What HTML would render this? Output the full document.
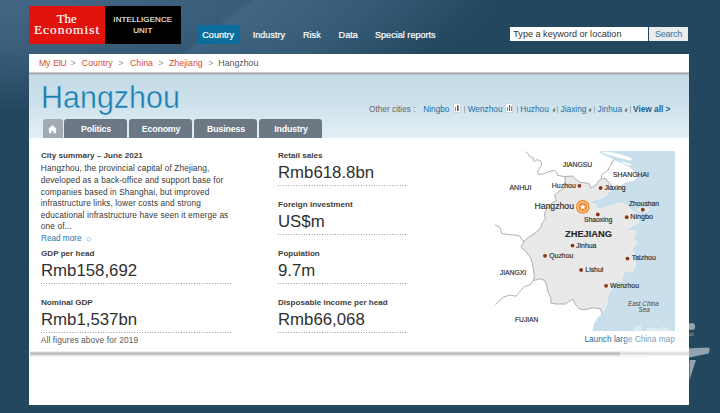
<!DOCTYPE html>
<html><head><meta charset="utf-8"><style>
*{margin:0;padding:0;box-sizing:border-box}
html,body{width:720px;height:413px;overflow:hidden}
body{position:relative;font-family:"Liberation Sans",sans-serif;background:#23475f}
.t{position:absolute;white-space:nowrap;line-height:0}
.b{position:absolute}
.tab{position:absolute;top:119px;height:19px;width:63px;background:#6c7884;border-radius:3px 3px 0 0}
.dot{position:absolute;height:1px;background-image:linear-gradient(90deg,#8393a0 1.1px,transparent 1.1px);background-size:2.6px 1px}
</style></head><body>
<div class="b" style="left:0;top:0;width:720px;height:413px;background:radial-gradient(ellipse 500px 110px at 0px 0px, rgba(68,104,134,0.95) 0%, rgba(68,104,134,0.7) 45%, rgba(68,104,134,0) 100%),#23475f"></div>
<div class="b" style="left:0;top:0;width:720px;height:60px;background:linear-gradient(142deg, rgba(110,155,185,0) 0px, rgba(110,155,185,0) 152px, rgba(110,155,185,0.16) 158px, rgba(110,155,185,0.12) 230px, rgba(110,155,185,0) 300px)"></div>
<div class="b" style="left:29px;top:6px;width:76px;height:38px;background:#e2120c"></div>
<div class="b" style="left:105px;top:6px;width:76px;height:38px;background:#000"></div>
<div class="t" style="left:56.80px;top:19.28px;font-size:12.8px;color:#fff;font-family:'Liberation Serif',serif;-webkit-text-stroke:0.18px #fff">The</div>
<div class="t" style="left:33.90px;top:29.88px;font-size:13.4px;color:#fff;font-family:'Liberation Serif',serif;letter-spacing:1.0px;-webkit-text-stroke:0.18px #fff">Economist</div>
<div class="t" style="left:113.30px;top:20.26px;font-size:7.9px;color:#eee;letter-spacing:0.16px;-webkit-text-stroke:0.15px #eee">INTELLIGENCE</div>
<div class="t" style="left:133.20px;top:31.46px;font-size:7.9px;color:#eee;letter-spacing:0.2px;-webkit-text-stroke:0.15px #eee">UNIT</div>
<div class="b" style="left:197px;top:25px;width:43px;height:19px;background:#0b6d9c"></div>
<div class="t" style="left:202.30px;top:34.85px;font-size:9.1px;color:#fff;-webkit-text-stroke:0.2px #fff">Country</div>
<div class="t" style="left:252.70px;top:34.85px;font-size:9.1px;color:#fff;-webkit-text-stroke:0.2px #fff">Industry</div>
<div class="t" style="left:303.00px;top:34.85px;font-size:9.1px;color:#fff;-webkit-text-stroke:0.2px #fff">Risk</div>
<div class="t" style="left:338.60px;top:34.85px;font-size:9.1px;color:#fff;-webkit-text-stroke:0.2px #fff">Data</div>
<div class="t" style="left:375.00px;top:34.85px;font-size:9.1px;color:#fff;-webkit-text-stroke:0.2px #fff">Special reports</div>
<div class="b" style="left:510px;top:27px;width:138px;height:14px;background:#fff"></div>
<div class="b" style="left:649px;top:27px;width:39px;height:14px;background:#ececec"></div>
<div class="t" style="left:513.30px;top:34.15px;font-size:9.1px;color:#333;">Type a keyword or location</div>
<div class="t" style="left:655.00px;top:34.15px;font-size:9.1px;color:#3474a3;letter-spacing:-0.3px">Search</div>
<div class="b" style="left:29px;top:54px;width:660px;height:351px;background:#fff"></div>
<div class="b" style="left:29px;top:74px;width:660px;height:64px;background:linear-gradient(#c3dbe7 0%,#cbe0ea 40%,#e4eff5 100%)"></div>
<div class="b" style="left:29px;top:72px;width:660px;height:3px;background:linear-gradient(#e0e0e0 0%,#a2a6a8 45%,#a9b3b8 65%,#bfd5e0 100%)"></div>
<div class="t" style="left:39.00px;top:62.65px;font-size:8.8px;color:#d64d38;"><span style="letter-spacing:-0.3px">My</span></div>
<div class="t" style="left:53.30px;top:62.65px;font-size:8.8px;color:#d64d38;"><span style="letter-spacing:-0.7px">EIU</span></div>
<div class="t" style="left:70.60px;top:62.65px;font-size:8.8px;color:#999;">&gt;</div>
<div class="t" style="left:81.80px;top:62.65px;font-size:8.8px;color:#d64d38;">Country</div>
<div class="t" style="left:118.30px;top:62.65px;font-size:8.8px;color:#999;">&gt;</div>
<div class="t" style="left:130.00px;top:62.65px;font-size:8.8px;color:#d64d38;">China</div>
<div class="t" style="left:158.30px;top:62.65px;font-size:8.8px;color:#999;">&gt;</div>
<div class="t" style="left:169.00px;top:62.65px;font-size:8.8px;color:#d64d38;">Zhejiang</div>
<div class="t" style="left:208.30px;top:62.65px;font-size:8.8px;color:#999;">&gt;</div>
<div class="t" style="left:218.30px;top:62.65px;font-size:8.8px;color:#555;">Hangzhou</div>
<div class="t" style="left:40.60px;top:97.21px;font-size:32px;color:#1a7fb0;transform:scaleX(0.952);transform-origin:0 0;-webkit-text-stroke:0.45px #c8deea">Hangzhou</div>
<div class="t" style="left:369.00px;top:108.92px;font-size:8.3px;color:#666;">Other cities :</div>
<div class="t" style="left:423.20px;top:108.92px;font-size:8.3px;color:#1d6ea5;">Ningbo</div>
<div class="t" style="left:467.70px;top:108.92px;font-size:8.3px;color:#1d6ea5;">Wenzhou</div>
<div class="t" style="left:520.20px;top:108.92px;font-size:8.3px;color:#1d6ea5;">Huzhou</div>
<div class="t" style="left:560.60px;top:108.92px;font-size:8.3px;color:#1d6ea5;">Jiaxing</div>
<div class="t" style="left:597.60px;top:108.92px;font-size:8.3px;color:#1d6ea5;">Jinhua</div>
<div class="t" style="left:633.00px;top:108.92px;font-size:8.3px;color:#1a5f90;font-weight:bold;">View all &gt;</div>
<div class="b" style="left:463.9px;top:106px;width:0.8px;height:7px;background:#a3b0b9"></div>
<div class="b" style="left:516.8px;top:106px;width:0.8px;height:7px;background:#a3b0b9"></div>
<div class="b" style="left:557.3px;top:106px;width:0.8px;height:7px;background:#a3b0b9"></div>
<div class="b" style="left:594px;top:106px;width:0.8px;height:7px;background:#a3b0b9"></div>
<div class="b" style="left:630px;top:106px;width:0.8px;height:7px;background:#a3b0b9"></div>
<div class="b" style="left:452.9px;top:103px;width:8px;height:9.5px;background:#fff;border:1px solid #d4d4d4"></div><div class="b" style="left:454.7px;top:107px;width:1px;height:3.5px;background:#888"></div><div class="b" style="left:456.5px;top:105px;width:1.2px;height:5.5px;background:#1d6ea5"></div><div class="b" style="left:458.29999999999995px;top:106px;width:1px;height:4.5px;background:#888"></div>
<div class="b" style="left:505.4px;top:103px;width:8px;height:9.5px;background:#fff;border:1px solid #d4d4d4"></div><div class="b" style="left:507.2px;top:107px;width:1px;height:3.5px;background:#888"></div><div class="b" style="left:509.0px;top:105px;width:1.2px;height:5.5px;background:#1d6ea5"></div><div class="b" style="left:510.79999999999995px;top:106px;width:1px;height:4.5px;background:#888"></div>
<svg class="b" style="left:551.9px;top:107px" width="4" height="5" viewBox="0 0 4 5"><path d="M3.2,0.8 L3.2,4.6 L0.6,4.6 L1,2.6 Z" fill="#7a7a7a"/></svg>
<svg class="b" style="left:588.2px;top:107px" width="4" height="5" viewBox="0 0 4 5"><path d="M3.2,0.8 L3.2,4.6 L0.6,4.6 L1,2.6 Z" fill="#7a7a7a"/></svg>
<svg class="b" style="left:623.6px;top:107px" width="4" height="5" viewBox="0 0 4 5"><path d="M3.2,0.8 L3.2,4.6 L0.6,4.6 L1,2.6 Z" fill="#7a7a7a"/></svg>
<div class="tab" style="left:43px;width:20px;background:#a0aab3"></div>
<svg class="b" style="left:47px;top:124px" width="11" height="10" viewBox="0 0 11 10"><path d="M5.5,1 L10,5.6 L9,5.6 L9,9.2 L6.6,9.2 L6.6,7 L4.4,7 L4.4,9.2 L2,9.2 L2,5.6 L1,5.6 Z" fill="#fff"/></svg>
<div class="tab" style="left:64px"></div>
<div class="t" style="left:64.5px;width:63px;text-align:center;top:128.6px;font-size:8.8px;letter-spacing:-0.15px;color:#fff;font-weight:bold">Politics</div>
<div class="tab" style="left:129px"></div>
<div class="t" style="left:129.5px;width:63px;text-align:center;top:128.6px;font-size:8.8px;letter-spacing:-0.15px;color:#fff;font-weight:bold">Economy</div>
<div class="tab" style="left:194px"></div>
<div class="t" style="left:194.5px;width:63px;text-align:center;top:128.6px;font-size:8.8px;letter-spacing:-0.15px;color:#fff;font-weight:bold">Business</div>
<div class="tab" style="left:259px"></div>
<div class="t" style="left:259.5px;width:63px;text-align:center;top:128.6px;font-size:8.8px;letter-spacing:-0.15px;color:#fff;font-weight:bold">Industry</div>
<div class="t" style="left:41.00px;top:156.09px;font-size:8.1px;color:#3d3d3d;font-weight:bold;">City summary – June 2021</div>
<div class="t" style="left:40.80px;top:168.42px;font-size:8.3px;color:#383838;letter-spacing:0.12px">Hangzhou, the provincial capital of Zhejiang,</div>
<div class="t" style="left:40.80px;top:180.02px;font-size:8.3px;color:#383838;letter-spacing:0.12px">developed as a back-office and support base for</div>
<div class="t" style="left:40.80px;top:191.62px;font-size:8.3px;color:#383838;letter-spacing:0.12px">companies based in Shanghai, but improved</div>
<div class="t" style="left:40.80px;top:203.22px;font-size:8.3px;color:#383838;letter-spacing:0.12px">infrastructure links, lower costs and strong</div>
<div class="t" style="left:40.80px;top:214.82px;font-size:8.3px;color:#383838;letter-spacing:0.12px">educational infrastructure have seen it emerge as</div>
<div class="t" style="left:40.80px;top:226.42px;font-size:8.3px;color:#383838;letter-spacing:0.12px">one of...</div>
<div class="t" style="left:41.00px;top:238.56px;font-size:8.2px;color:#2474ab;">Read more &nbsp;<span style="font-size:7px;color:#5b9bc6">&#9671;</span></div>
<div class="t" style="left:41.00px;top:253.99px;font-size:8.1px;color:#3d3d3d;font-weight:bold;">GDP per head</div>
<div class="t" style="left:41.00px;top:271.18px;font-size:16.8px;color:#303030;">Rmb158,692</div>
<div class="dot" style="left:41px;top:283px;width:192px"></div>
<div class="t" style="left:41.00px;top:302.99px;font-size:8.1px;color:#3d3d3d;font-weight:bold;">Nominal GDP</div>
<div class="t" style="left:41.00px;top:320.18px;font-size:16.8px;color:#303030;">Rmb1,537bn</div>
<div class="dot" style="left:41px;top:332px;width:192px"></div>
<div class="t" style="left:40.80px;top:340.42px;font-size:8.3px;color:#555;letter-spacing:0.13px">All figures above for 2019</div>
<div class="t" style="left:278.00px;top:156.29px;font-size:8.1px;color:#3d3d3d;font-weight:bold;">Retail sales</div>
<div class="t" style="left:278.00px;top:173.48px;font-size:16.8px;color:#303030;">Rmb618.8bn</div>
<div class="dot" style="left:278px;top:185.3px;width:130px"></div>
<div class="t" style="left:278.00px;top:204.69px;font-size:8.1px;color:#3d3d3d;font-weight:bold;">Foreign investment</div>
<div class="t" style="left:278.00px;top:221.88px;font-size:16.8px;color:#303030;">US$m</div>
<div class="dot" style="left:278px;top:233.7px;width:130px"></div>
<div class="t" style="left:278.00px;top:253.99px;font-size:8.1px;color:#3d3d3d;font-weight:bold;">Population</div>
<div class="t" style="left:278.00px;top:271.18px;font-size:16.8px;color:#303030;">9.7m</div>
<div class="dot" style="left:278px;top:283px;width:130px"></div>
<div class="t" style="left:278.00px;top:302.99px;font-size:8.1px;color:#3d3d3d;font-weight:bold;">Disposable income per head</div>
<div class="t" style="left:278.00px;top:320.18px;font-size:16.8px;color:#303030;">Rmb66,068</div>
<div class="dot" style="left:278px;top:332px;width:130px"></div>
<div class="b" style="left:30px;top:351px;width:659px;height:6px;background:linear-gradient(#fff 0%,#b2b2b2 38%,#c8c8c8 55%,#fff 100%)"></div>
<svg class="b" style="left:0;top:0" width="720" height="413" viewBox="0 0 720 413"><rect x="585" y="151" width="90" height="180" fill="#c9e0ec"/><path d="M480,140 L600,140 L600,151 L600,153 L614.4,160.1 L622.8,163.7 L630.1,167.4 L635,172.2 L637.4,177 L633.7,180.7 L625.5,182.4 L620.7,185.3 L612.9,189.6 L608.1,192.5 L606.1,195.9 L599.4,199.3 L592.6,200.7 L589.7,203 L595.5,203.7 L596.5,207 L599.4,209 L607.1,207 L613.9,204.1 L620.7,202.7 L622.3,202.4 L627.1,206 L632,209.7 L636.8,213.3 L639.2,218.2 L638.6,222.4 L634.4,225.4 L629.5,227.8 L626.5,230.9 L627.7,231.4 L631.9,229.7 L637,231.4 L633.6,238.2 L637,242.4 L634.4,245.8 L631.9,250 L634.4,253.4 L636.1,260.2 L635.3,267 L632.7,272.1 L625.1,272.1 L621.7,277.2 L623.4,280.5 L620,282.2 L616.6,280.5 L615,285.6 L610.7,290.7 L607,297 L607.8,303 L603.6,311.4 L602.2,313.6 L598,317 L593.9,323.9 L592.5,331 L592.5,331.5 L480,331.5 Z" fill="#fff"/><path d="M602.2,313.6 L600.3,308.8 L592.5,307.8 L584.8,309.8 L579,308.8 L575.1,304 L573.1,299.1 L571.2,300.1 L565.4,304 L555.7,304 L550.9,303 L550.9,298.1 L548,292.3 L547,286.5 L545,280.7 L540.2,278.8 L533.4,280.7 L534.4,276.8 L533.4,269 L532.4,263.3 L530.5,257.4 L525.7,251.6 L520.8,247 L522,245 L524.3,241 L527.7,237.7 L532.3,235 L537.7,231 L541,227 L542.3,223 L545.5,219 L544.5,215 L545.5,211 L547.5,207 L552,203 L556.5,200.5 L555.5,198.3 L554.5,195 L558,192 L561.7,189.6 L564.7,187 L565.1,182 L565.1,176.5 L572.7,176 L576.9,180.3 L580.3,182.4 L585.4,182.8 L588.8,183.6 L590.9,187.9 L593.9,186.2 L596.4,184.5 L598.6,181.1 L601.5,178.6 L605.8,178.6 L608.3,182 L611.7,185.3 L612.9,189.6 L608.1,192.5 L606.1,195.9 L599.4,199.3 L592.6,200.7 L589.7,203 L595.5,203.7 L596.5,207 L599.4,209 L607.1,207 L613.9,204.1 L620.7,202.7 L622.3,202.4 L627.1,206 L632,209.7 L636.8,213.3 L639.2,218.2 L638.6,222.4 L634.4,225.4 L629.5,227.8 L626.5,230.9 L627.7,231.4 L631.9,229.7 L637,231.4 L633.6,238.2 L637,242.4 L634.4,245.8 L631.9,250 L634.4,253.4 L636.1,260.2 L635.3,267 L632.7,272.1 L625.1,272.1 L621.7,277.2 L623.4,280.5 L620,282.2 L616.6,280.5 L615,285.6 L610.7,290.7 L607,297 L607.8,303 L603.6,311.4 L602.2,313.6 Z" fill="#e9e9e9"/><path d="M602,151.4 L612,152.4 L621,154.4 L630,157.5 L632.3,159.3 L630,160.6 L619,157.8 L609,155 L603,152.8 Z" fill="#fff"/><path d="M622.5,161.5 L631.5,164.5 L630.5,165.8 L622,163 Z" fill="#fff"/><ellipse cx="643.5" cy="209.6" rx="6.5" ry="2.6" fill="#e9e9e9"/><path d="M525.4,151.6 L528.5,154.3 L529.4,156.5 L531.2,157 L533.4,157.9 L533,160.5 L534.8,161.4 L537,159.6 L541.1,161.4 L541.5,165 L539.3,168.6 L537.5,172.2 L538.4,174.4 L543.3,174 L548.7,171.7 L554.9,170.4 L556.7,172.2 L557.6,175.3 L562.1,176.2 L565.1,176.5" fill="none" stroke="#9c9c9c" stroke-width="0.8" stroke-linejoin="round"/><path d="M602.2,313.6 L600.3,308.8 L592.5,307.8 L584.8,309.8 L579,308.8 L575.1,304 L573.1,299.1 L571.2,300.1 L565.4,304 L555.7,304 L550.9,303 L550.9,298.1 L548,292.3 L547,286.5 L545,280.7 L540.2,278.8 L533.4,280.7 L534.4,276.8 L533.4,269 L532.4,263.3 L530.5,257.4 L525.7,251.6 L520.8,247 L522,245 L524.3,241 L527.7,237.7 L532.3,235 L537.7,231 L541,227 L542.3,223 L545.5,219 L544.5,215 L545.5,211 L547.5,207 L552,203 L556.5,200.5 L555.5,198.3 L554.5,195 L558,192 L561.7,189.6 L564.7,187 L565.1,182 L565.1,176.5 L572.7,176 L576.9,180.3 L580.3,182.4 L585.4,182.8 L588.8,183.6 L590.9,187.9 L593.9,186.2 L596.4,184.5 L598.6,181.1 L601.5,178.6 L605.8,178.6 L608.3,182 L611.7,185.3 L612.9,189.6" fill="none" stroke="#9c9c9c" stroke-width="0.8" stroke-linejoin="round"/><path d="M495.1,224.8 L500.2,227.7 L501.6,233.5 L511.8,235 L515,235 L520.3,236.3 L521.7,239.7 L524.3,241" fill="none" stroke="#9c9c9c" stroke-width="0.8" stroke-linejoin="round"/><path d="M533.4,280.7 L532.4,281.7 L530.5,284.6 L524.7,286.5 L520.8,290.4 L516.1,296.2 L509.6,295.1 L503.1,297.3 L495.4,304.9" fill="none" stroke="#9c9c9c" stroke-width="0.8" stroke-linejoin="round"/><path d="M601.5,178.6 L601.5,175.2 L604.9,172.6 L608.3,170.1 L609.2,167.5 L610.8,165 L612,162 L615,159.5" fill="none" stroke="#9c9c9c" stroke-width="0.8" stroke-linejoin="round"/><circle cx="579.4" cy="185.8" r="1.9" fill="#8a3514"/><circle cx="600.6" cy="188" r="1.9" fill="#8a3514"/><circle cx="597.8" cy="214.4" r="1.9" fill="#8a3514"/><circle cx="642.8" cy="209.7" r="1.9" fill="#8a3514"/><circle cx="626.7" cy="217.2" r="1.9" fill="#8a3514"/><circle cx="572.5" cy="245.6" r="1.9" fill="#8a3514"/><circle cx="545" cy="255.8" r="1.9" fill="#8a3514"/><circle cx="627.5" cy="258.6" r="1.9" fill="#8a3514"/><circle cx="581.1" cy="270" r="1.9" fill="#8a3514"/><circle cx="606.1" cy="285.8" r="1.9" fill="#8a3514"/><circle cx="582.8" cy="206.9" r="6.8" fill="#f08a2a"/><circle cx="582.8" cy="206.9" r="5.0" fill="none" stroke="#fff" stroke-width="0.75"/><polygon points="582.80,203.70 583.65,205.93 586.03,206.05 584.18,207.55 584.80,209.85 582.80,208.55 580.80,209.85 581.42,207.55 579.57,206.05 581.95,205.93" fill="#fff"/></svg>
<div class="t" style="left:562.80px;top:164.84px;font-size:6.8px;color:#2b2b2b;-webkit-text-stroke:0.15px #2b2b2b">JIANGSU</div>
<div class="t" style="left:613.00px;top:174.61px;font-size:6.9px;color:#2b2b2b;-webkit-text-stroke:0.15px #2b2b2b">SHANGHAI</div>
<div class="t" style="left:509.40px;top:188.34px;font-size:7.1px;color:#2b2b2b;-webkit-text-stroke:0.15px #2b2b2b">ANHUI</div>
<div class="t" style="left:551.70px;top:185.57px;font-size:7.0px;color:#2b2b2b;-webkit-text-stroke:0.15px #2b2b2b">Huzhou</div>
<div class="t" style="left:604.40px;top:188.44px;font-size:6.8px;color:#2b2b2b;-webkit-text-stroke:0.15px #2b2b2b">Jiaxing</div>
<div class="t" style="left:534.40px;top:206.38px;font-size:8.7px;color:#2b2b2b;-webkit-text-stroke:0.15px #2b2b2b">Hangzhou</div>
<div class="t" style="left:583.90px;top:219.64px;font-size:6.8px;color:#2b2b2b;-webkit-text-stroke:0.15px #2b2b2b">Shaoxing</div>
<div class="t" style="left:628.90px;top:203.74px;font-size:6.8px;color:#2b2b2b;-webkit-text-stroke:0.15px #2b2b2b">Zhoushan</div>
<div class="t" style="left:630.30px;top:216.90px;font-size:7.2px;color:#2b2b2b;-webkit-text-stroke:0.15px #2b2b2b">Ningbo</div>
<div class="t" style="left:565.00px;top:234.38px;font-size:9.3px;color:#2b2b2b;font-weight:bold;-webkit-text-stroke:0.15px #2b2b2b">ZHEJIANG</div>
<div class="t" style="left:576.10px;top:245.91px;font-size:6.9px;color:#2b2b2b;-webkit-text-stroke:0.15px #2b2b2b">Jinhua</div>
<div class="t" style="left:549.20px;top:255.61px;font-size:6.9px;color:#2b2b2b;-webkit-text-stroke:0.15px #2b2b2b">Quzhou</div>
<div class="t" style="left:631.70px;top:258.37px;font-size:7.0px;color:#2b2b2b;-webkit-text-stroke:0.15px #2b2b2b">Taizhou</div>
<div class="t" style="left:585.30px;top:270.11px;font-size:6.9px;color:#2b2b2b;-webkit-text-stroke:0.15px #2b2b2b">Lishui</div>
<div class="t" style="left:610.00px;top:285.61px;font-size:6.9px;color:#2b2b2b;-webkit-text-stroke:0.15px #2b2b2b">Wenzhou</div>
<div class="t" style="left:499.80px;top:273.14px;font-size:6.8px;color:#2b2b2b;-webkit-text-stroke:0.15px #2b2b2b">JIANGXI</div>
<div class="t" style="left:515.00px;top:319.98px;font-size:6.7px;color:#2b2b2b;-webkit-text-stroke:0.15px #2b2b2b">FUJIAN</div>
<div class="t" style="left:628.00px;top:303.62px;font-size:6.3px;color:#444;font-style:italic">East China</div>
<div class="t" style="left:638.60px;top:310.02px;font-size:6.3px;color:#444;font-style:italic">Sea</div>
<div class="t" style="left:584.40px;top:338.52px;font-size:8.3px;color:#2d6b99;">Launch large China map</div>
<svg class="b" style="left:0;top:0" width="720" height="413" viewBox="0 0 720 413"><g fill="#fff" fill-opacity="0.5"><circle cx="691.6" cy="326.5" r="3.6"/><path d="M620,351.5 L708,347.5 Q710,347.6 709.6,349.5 L709.2,352.5 Q709,353.6 707.5,353.8 L689,357.5 L620,356.5 Z"/><path d="M689.5,360 L696,360 L689.5,380 Z"/><text x="688.5" y="336.3" font-family="Liberation Serif" font-style="italic" font-size="5.5">ak</text></g><g fill="#fff" fill-opacity="0.35"><rect x="626" y="334" width="50" height="10"/><path d="M634,331 L635,326.5 L641,325.5 L642,331 Z M645,331 L647,328 L655,327.5 L660,329 L663,326.5 L668,328.5 L671,331 Z"/></g></svg>
</body></html>
